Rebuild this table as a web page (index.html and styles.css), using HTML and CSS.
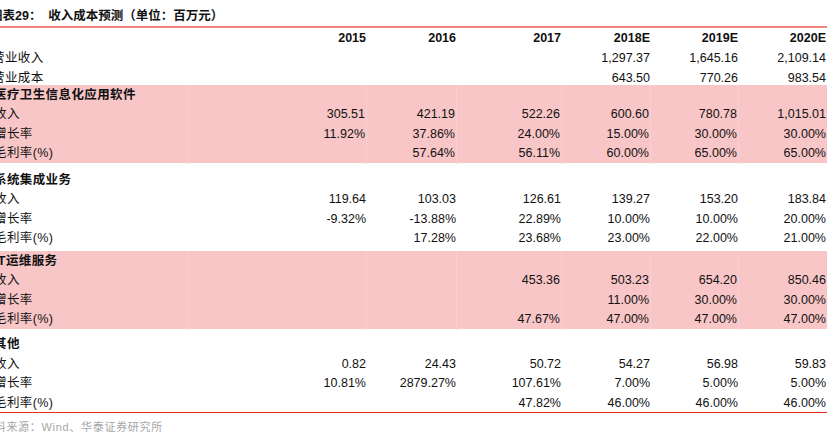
FILE: index.html
```html
<!DOCTYPE html>
<html lang="zh-CN">
<head>
<meta charset="utf-8">
<title>收入成本预测</title>
<link rel="stylesheet" href="styles.css">
</head>
<body>
<div class="sheet">
  <div class="title"><b>图表29：</b>&nbsp; 收入成本预测（单位：百万元）</div>
  <div class="table">
    <div class="top">
      <div class="row head"><span class="lbl"></span><span>2015</span><span>2016</span><span>2017</span><span>2018E</span><span>2019E</span><span>2020E</span></div>
      <div class="row"><span class="lbl">营业收入</span><span></span><span></span><span></span><span>1,297.37</span><span>1,645.16</span><span>2,109.14</span></div>
      <div class="row short"><span class="lbl">营业成本</span><span></span><span></span><span></span><span>643.50</span><span>770.26</span><span>983.54</span></div>
    </div>
    <div class="group pink">
      <div class="row"><span class="lbl gh">医疗卫生信息化应用软件</span><span></span><span></span><span></span><span></span><span></span><span></span></div>
      <div class="row"><span class="lbl">收入</span><span>305.51</span><span>421.19</span><span>522.26</span><span>600.60</span><span>780.78</span><span>1,015.01</span></div>
      <div class="row"><span class="lbl">增长率</span><span>11.92%</span><span>37.86%</span><span>24.00%</span><span>15.00%</span><span>30.00%</span><span>30.00%</span></div>
      <div class="row"><span class="lbl">毛利率(%)</span><span></span><span>57.64%</span><span>56.11%</span><span>60.00%</span><span>65.00%</span><span>65.00%</span></div>
    </div>
    <div class="group white first">
      <div class="row"><span class="lbl gh">系统集成业务</span><span></span><span></span><span></span><span></span><span></span><span></span></div>
      <div class="row"><span class="lbl">收入</span><span>119.64</span><span>103.03</span><span>126.61</span><span>139.27</span><span>153.20</span><span>183.84</span></div>
      <div class="row"><span class="lbl">增长率</span><span>-9.32%</span><span>-13.88%</span><span>22.89%</span><span>10.00%</span><span>10.00%</span><span>20.00%</span></div>
      <div class="row"><span class="lbl">毛利率(%)</span><span></span><span>17.28%</span><span>23.68%</span><span>23.00%</span><span>22.00%</span><span>21.00%</span></div>
    </div>
    <div class="group pink">
      <div class="row"><span class="lbl gh">IT运维服务</span><span></span><span></span><span></span><span></span><span></span><span></span></div>
      <div class="row"><span class="lbl">收入</span><span></span><span></span><span>453.36</span><span>503.23</span><span>654.20</span><span>850.46</span></div>
      <div class="row"><span class="lbl">增长率</span><span></span><span></span><span></span><span>11.00%</span><span>30.00%</span><span>30.00%</span></div>
      <div class="row"><span class="lbl">毛利率(%)</span><span></span><span></span><span>47.67%</span><span>47.00%</span><span>47.00%</span><span>47.00%</span></div>
    </div>
    <div class="group white last">
      <div class="row"><span class="lbl gh">其他</span><span></span><span></span><span></span><span></span><span></span><span></span></div>
      <div class="row"><span class="lbl">收入</span><span>0.82</span><span>24.43</span><span>50.72</span><span>54.27</span><span>56.98</span><span>59.83</span></div>
      <div class="row"><span class="lbl">增长率</span><span>10.81%</span><span>2879.27%</span><span>107.61%</span><span>7.00%</span><span>5.00%</span><span>5.00%</span></div>
      <div class="row"><span class="lbl">毛利率(%)</span><span></span><span></span><span>47.82%</span><span>46.00%</span><span>46.00%</span><span>46.00%</span></div>
    </div>
  </div>
  <div class="source">资料来源：Wind、华泰证券研究所</div>
</div>
</body>
</html>
```
FILE: styles.css
```css
html, body {
  margin: 0;
  padding: 0;
  background: #ffffff;
}
body {
  font-family: "Liberation Sans", "Noto Sans CJK SC", sans-serif;
  font-size: 12.5px;
  color: #111111;
  overflow: hidden;
}
.sheet {
  width: 831px;
  margin-left: -4px;
}
.title {
  margin-left: -6px;
  padding-top: 6px;
  height: 20px;
  line-height: 20px;
  font-weight: bold;
  white-space: nowrap;
}
.title b {
  font-weight: bold;
}
.table {
  border-top: 2px solid #f0857a;
  border-bottom: 1px solid #e5291c;
}
.row {
  display: grid;
  grid-template-columns: 192px 179px 90px 105px 89px 88px 88px;
  height: 19.5px;
  line-height: 21px;
}
.row span {
  text-align: right;
  padding-right: 1px;
  white-space: nowrap;
}
.row .lbl {
  text-align: left;
  padding-right: 0;
  text-indent: -2px;
  letter-spacing: 0.4px;
}
.top .row .lbl {
  text-indent: -4px;
}
.row .gh {
  font-weight: bold;
}
.head {
  height: 20px;
  line-height: 20px;
  font-weight: bold;
}
.top .short {
  height: 17px;
}
.pink {
  background: #f8c6c7;
}
.pink .row span {
  border-right: 1px solid #f9cfd0;
}
.pink .row span:last-child {
  border-right: none;
}
.white.first {
  padding-top: 7px;
  padding-bottom: 3px;
}
.white.last {
  padding-top: 5.5px;
}
.source {
  margin-left: -13px;
  padding-top: 7px;
  line-height: 14px;
  font-size: 11px;
  color: #a6a6a6;
  letter-spacing: 0.7px;
  white-space: nowrap;
}
```
